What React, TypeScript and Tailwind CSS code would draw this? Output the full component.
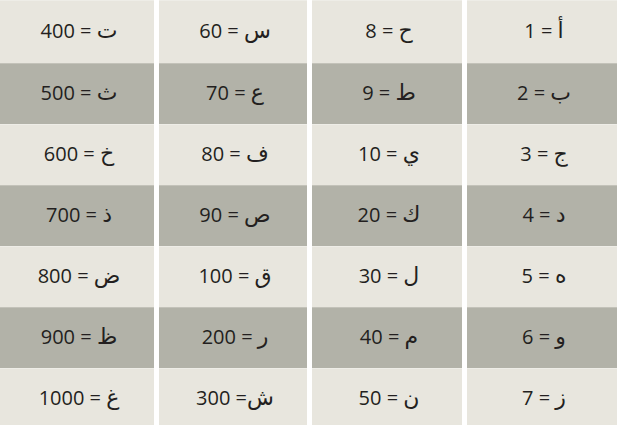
import React from "react";

type Item = [string, string];

const cols: { w: string; items: Item[] }[] = [
  { w: "w-[154px]", items: [["ت", " = 400"], ["ث", " = 500"], ["خ", " = 600"], ["ذ", " = 700"], ["ض", " = 800"], ["ظ", " = 900"], ["غ", " = 1000"]] },
  { w: "w-[148px]", items: [["س", " = 60"], ["ع", " = 70"], ["ف", " = 80"], ["ص", " = 90"], ["ق", " = 100"], ["ر", " = 200"], ["ش", "= 300"]] },
  { w: "w-[150px]", items: [["ح", " = 8"], ["ط", " = 9"], ["ي", " = 10"], ["ك", " = 20"], ["ل", " = 30"], ["م", " = 40"], ["ن", " = 50"]] },
  { w: "w-[150px]", items: [["أ", " = 1"], ["ب", " = 2"], ["ج", " = 3"], ["د", " = 4"], ["ه", " = 5"], ["و", " = 6"], ["ز", " = 7"]] },
];

export default function App() {
  return (
    <div
      className="w-[617px] h-[425px] overflow-hidden bg-white flex gap-[5px] text-[#231f20]"
      style={{ fontFamily: '"Open Sans", "DejaVu Sans", sans-serif' }}
    >
      {cols.map((c, ci) => (
        <div key={ci} className={`${c.w} flex flex-col shrink-0`}>
          {c.items.map((t, i) => (
            <div
              key={i}
              dir="rtl"
              className={`${i === 0 ? "h-[63px]" : "h-[61px]"} shrink-0 flex items-center justify-center pl-[4px] pb-[5px] ${
                i % 2 === 1 ? "bg-[#b2b2a8] border-t border-[#c3c2b9]" : "bg-[#e8e6de] border-t border-[#eeede7]"
              }`}
            >
              <span className="whitespace-pre leading-none">
                <span className="text-[22px]">{t[0]}</span>
                <span className="text-[20px]">{t[1]}</span>
              </span>
            </div>
          ))}
        </div>
      ))}
    </div>
  );
}
